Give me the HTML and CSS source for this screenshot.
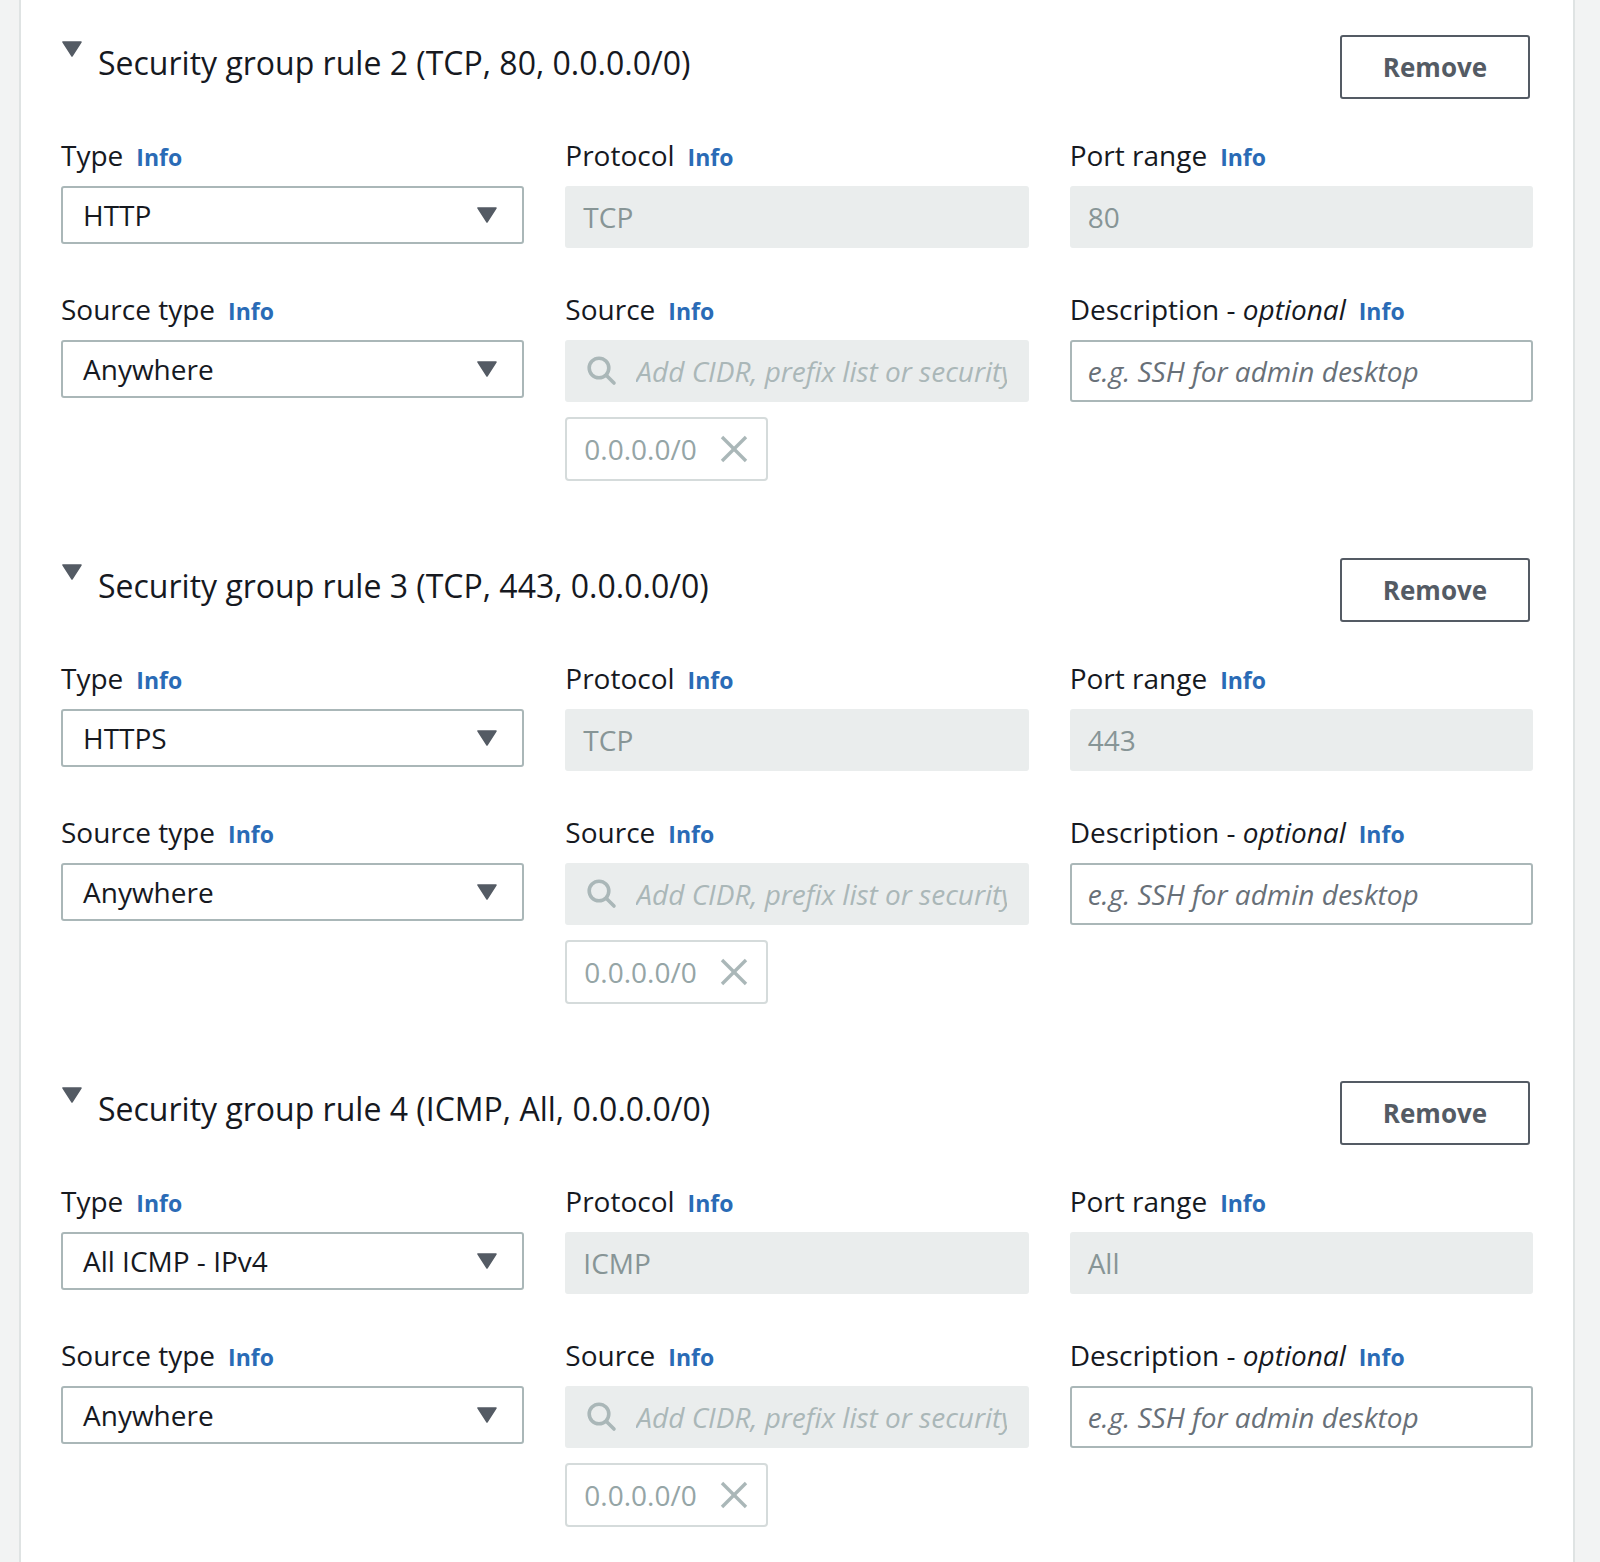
FILE: index.html
```html
<!DOCTYPE html>
<html lang="en">
<head>
<meta charset="utf-8">
<title>Security group rules</title>
<link rel="stylesheet" href="styles.css">
</head>
<body>
<div class="panel">

  <section class="rule">
    <div class="rule-head">
      <div class="rule-title">
        <svg class="caret" viewBox="0 0 20 16" width="20" height="16"><polygon points="1,1 19,1 10,15" /></svg>
        <h3>Security group rule 2 (TCP, 80, 0.0.0.0/0)</h3>
      </div>
      <button class="btn">Remove</button>
    </div>
    <div class="grid">
      <div class="field">
        <div class="label"><span>Type</span><a class="info">Info</a></div>
        <div class="select"><span>HTTP</span><svg class="arrow" viewBox="0 0 20 16" width="20" height="16"><polygon points="1,1 19,1 10,15" /></svg></div>
      </div>
      <div class="field">
        <div class="label"><span>Protocol</span><a class="info">Info</a></div>
        <div class="input disabled">TCP</div>
      </div>
      <div class="field">
        <div class="label"><span>Port range</span><a class="info">Info</a></div>
        <div class="input disabled">80</div>
      </div>
      <div class="field">
        <div class="label"><span>Source type</span><a class="info">Info</a></div>
        <div class="select"><span>Anywhere</span><svg class="arrow" viewBox="0 0 20 16" width="20" height="16"><polygon points="1,1 19,1 10,15" /></svg></div>
      </div>
      <div class="field">
        <div class="label"><span>Source</span><a class="info">Info</a></div>
        <div class="input disabled search">
          <svg class="search-icon" viewBox="0 0 30 30" width="30" height="30"><circle cx="12" cy="12" r="9.8" /><line x1="19.2" y1="19.2" x2="27" y2="27" /></svg>
          <span class="placeholder">Add CIDR, prefix list or security group</span>
        </div>
        <div class="token"><span>0.0.0.0/0</span><svg class="x-icon" viewBox="0 0 28 28" width="28" height="28"><line x1="2" y1="2" x2="26" y2="26" /><line x1="26" y1="2" x2="2" y2="26" /></svg></div>
      </div>
      <div class="field">
        <div class="label"><span>Description - <em>optional</em></span><a class="info">Info</a></div>
        <div class="input"><span class="placeholder">e.g. SSH for admin desktop</span></div>
      </div>
    </div>
  </section>

  <section class="rule">
    <div class="rule-head">
      <div class="rule-title">
        <svg class="caret" viewBox="0 0 20 16" width="20" height="16"><polygon points="1,1 19,1 10,15" /></svg>
        <h3>Security group rule 3 (TCP, 443, 0.0.0.0/0)</h3>
      </div>
      <button class="btn">Remove</button>
    </div>
    <div class="grid">
      <div class="field">
        <div class="label"><span>Type</span><a class="info">Info</a></div>
        <div class="select"><span>HTTPS</span><svg class="arrow" viewBox="0 0 20 16" width="20" height="16"><polygon points="1,1 19,1 10,15" /></svg></div>
      </div>
      <div class="field">
        <div class="label"><span>Protocol</span><a class="info">Info</a></div>
        <div class="input disabled">TCP</div>
      </div>
      <div class="field">
        <div class="label"><span>Port range</span><a class="info">Info</a></div>
        <div class="input disabled">443</div>
      </div>
      <div class="field">
        <div class="label"><span>Source type</span><a class="info">Info</a></div>
        <div class="select"><span>Anywhere</span><svg class="arrow" viewBox="0 0 20 16" width="20" height="16"><polygon points="1,1 19,1 10,15" /></svg></div>
      </div>
      <div class="field">
        <div class="label"><span>Source</span><a class="info">Info</a></div>
        <div class="input disabled search">
          <svg class="search-icon" viewBox="0 0 30 30" width="30" height="30"><circle cx="12" cy="12" r="9.8" /><line x1="19.2" y1="19.2" x2="27" y2="27" /></svg>
          <span class="placeholder">Add CIDR, prefix list or security group</span>
        </div>
        <div class="token"><span>0.0.0.0/0</span><svg class="x-icon" viewBox="0 0 28 28" width="28" height="28"><line x1="2" y1="2" x2="26" y2="26" /><line x1="26" y1="2" x2="2" y2="26" /></svg></div>
      </div>
      <div class="field">
        <div class="label"><span>Description - <em>optional</em></span><a class="info">Info</a></div>
        <div class="input"><span class="placeholder">e.g. SSH for admin desktop</span></div>
      </div>
    </div>
  </section>

  <section class="rule">
    <div class="rule-head">
      <div class="rule-title">
        <svg class="caret" viewBox="0 0 20 16" width="20" height="16"><polygon points="1,1 19,1 10,15" /></svg>
        <h3>Security group rule 4 (ICMP, All, 0.0.0.0/0)</h3>
      </div>
      <button class="btn">Remove</button>
    </div>
    <div class="grid">
      <div class="field">
        <div class="label"><span>Type</span><a class="info">Info</a></div>
        <div class="select"><span>All ICMP - IPv4</span><svg class="arrow" viewBox="0 0 20 16" width="20" height="16"><polygon points="1,1 19,1 10,15" /></svg></div>
      </div>
      <div class="field">
        <div class="label"><span>Protocol</span><a class="info">Info</a></div>
        <div class="input disabled">ICMP</div>
      </div>
      <div class="field">
        <div class="label"><span>Port range</span><a class="info">Info</a></div>
        <div class="input disabled">All</div>
      </div>
      <div class="field">
        <div class="label"><span>Source type</span><a class="info">Info</a></div>
        <div class="select"><span>Anywhere</span><svg class="arrow" viewBox="0 0 20 16" width="20" height="16"><polygon points="1,1 19,1 10,15" /></svg></div>
      </div>
      <div class="field">
        <div class="label"><span>Source</span><a class="info">Info</a></div>
        <div class="input disabled search">
          <svg class="search-icon" viewBox="0 0 30 30" width="30" height="30"><circle cx="12" cy="12" r="9.8" /><line x1="19.2" y1="19.2" x2="27" y2="27" /></svg>
          <span class="placeholder">Add CIDR, prefix list or security group</span>
        </div>
        <div class="token"><span>0.0.0.0/0</span><svg class="x-icon" viewBox="0 0 28 28" width="28" height="28"><line x1="2" y1="2" x2="26" y2="26" /><line x1="26" y1="2" x2="2" y2="26" /></svg></div>
      </div>
      <div class="field">
        <div class="label"><span>Description - <em>optional</em></span><a class="info">Info</a></div>
        <div class="input"><span class="placeholder">e.g. SSH for admin desktop</span></div>
      </div>
    </div>
  </section>

</div>
</body>
</html>
```

FILE: styles.css
```css
* { box-sizing: border-box; }

html, body {
  margin: 0;
  padding: 0;
  background: #f2f3f3;
  font-family: "Open Sans", "Noto Sans", sans-serif;
  color: #16191f;
}

.panel {
  margin-left: 19px;
  width: 1556px;
  min-height: 1562px;
  background: #ffffff;
  border-left: 2px solid #dfe3e3;
  border-right: 2px solid #dfe3e3;
  padding: 35px 40px 0 40px;
}

.rule {
  margin-bottom: 77px;
}

.rule-head {
  display: flex;
  justify-content: space-between;
  align-items: flex-start;
  height: 64px;
  margin-bottom: 36px;
}

.rule-title {
  display: flex;
  align-items: flex-start;
  margin-top: 6px;
}

.caret {
  display: block;
  margin-left: 1px;
  margin-right: 16px;
  fill: #545b64;
  stroke: #545b64;
  stroke-width: 1.5;
  stroke-linejoin: round;
}

.rule-title h3 {
  margin: 0;
  font-size: 32px;
  line-height: 44px;
  font-weight: 400;
}

.btn {
  width: 190px;
  height: 64px;
  margin-right: 3px;
  background: #ffffff;
  border: 2px solid #545b64;
  border-radius: 3px;
  font-family: inherit;
  font-size: 26px;
  font-weight: 700;
  color: #545b64;
  padding: 0;
}

.grid {
  display: grid;
  grid-template-columns: repeat(3, minmax(0, 1fr));
  column-gap: 41px;
  row-gap: 41px;
  align-items: start;
}

.field {
  min-width: 0;
}

.label {
  display: flex;
  align-items: baseline;
  height: 40px;
  line-height: 40px;
  font-size: 28px;
  margin-bottom: 11px;
  white-space: nowrap;
}

.label em {
  font-style: italic;
}

.info {
  margin-left: 13px;
  font-size: 23px;
  font-weight: 700;
  color: #2a6bb6;
  text-decoration: none;
}

.select {
  display: flex;
  align-items: center;
  justify-content: space-between;
  height: 58px;
  border: 2px solid #aab7b8;
  border-radius: 3px;
  padding: 0 25px 0 20px;
  font-size: 28px;
}

.arrow {
  display: block;
  fill: #545b64;
  stroke: #545b64;
  stroke-width: 1.5;
  stroke-linejoin: round;
}

.input {
  display: flex;
  align-items: center;
  height: 62px;
  border: 2px solid #aab7b8;
  border-radius: 3px;
  padding: 0 18px 0 16px;
  font-size: 28px;
  overflow: hidden;
  white-space: nowrap;
}

.input.disabled {
  background: #eaeded;
  border-color: #eaeded;
  color: #879596;
}

.placeholder {
  font-style: italic;
  color: #687078;
}

.search {
  padding-left: 20px;
  padding-right: 20px;
}

.search .placeholder {
  color: #aab7b8;
  overflow: hidden;
  min-width: 0;
  flex: 1 1 auto;
  margin-left: 19px;
}

.search-icon {
  display: block;
  flex: none;
  fill: none;
  stroke: #aab7b8;
  stroke-width: 3.6;
  stroke-linecap: round;
}

.token {
  display: inline-flex;
  align-items: center;
  margin-top: 15px;
  width: 203px;
  height: 64px;
  border: 2px solid #d5dbdb;
  border-radius: 4px;
  padding: 0 18px 0 17px;
  font-size: 28px;
  color: #95a5a6;
  justify-content: space-between;
}

.x-icon {
  display: block;
  fill: none;
  stroke: #aab7b8;
  stroke-width: 3.4;
  stroke-linecap: butt;
}
```
